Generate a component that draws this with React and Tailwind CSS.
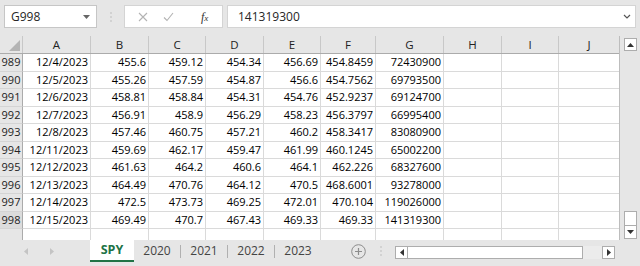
import React from "react";

const rows = [
  ["989", "12/4/2023", "455.6", "459.12", "454.34", "456.69", "454.8459", "72430900"],
  ["990", "12/5/2023", "455.26", "457.59", "454.87", "456.6", "454.7562", "69793500"],
  ["991", "12/6/2023", "458.81", "458.84", "454.31", "454.76", "452.9237", "69124700"],
  ["992", "12/7/2023", "456.91", "458.9", "456.29", "458.23", "456.3797", "66995400"],
  ["993", "12/8/2023", "457.46", "460.75", "457.21", "460.2", "458.3417", "83080900"],
  ["994", "12/11/2023", "459.69", "462.17", "459.47", "461.99", "460.1245", "65002200"],
  ["995", "12/12/2023", "461.63", "464.2", "460.6", "464.1", "462.226", "68327600"],
  ["996", "12/13/2023", "464.49", "470.76", "464.12", "470.5", "468.6001", "93278000"],
  ["997", "12/14/2023", "472.5", "473.73", "469.25", "472.01", "470.104", "119026000"],
  ["998", "12/15/2023", "469.49", "470.7", "467.43", "469.33", "469.33", "141319300"],
];

const cols = ["A", "B", "C", "D", "E", "F", "G", "H", "I", "J"];
const gridCols = "grid grid-cols-[23px_68px_58px_57px_58px_57px_55px_68px_58px_57px_61px]";

const FormulaBar = () => (
  <div className="h-[36px] flex items-start pt-[5px] pl-[4px] text-[12px] text-[#262626]">
    <div className="w-[93px] h-[23px] bg-white border border-[#c6c6c6] flex items-center justify-between pl-[6px] pr-[6px]">
      <span>G998</span>
      <svg width="7" height="4" viewBox="0 0 7 4"><path d="M0 0h7L3.5 4z" fill="#666" /></svg>
    </div>
    <div className="w-[27px] h-[23px] flex items-center justify-center">
      <svg width="2" height="10" viewBox="0 0 2 10">
        <circle cx="1" cy="1" r="0.8" fill="#b8b8b8" />
        <circle cx="1" cy="5" r="0.8" fill="#b8b8b8" />
        <circle cx="1" cy="9" r="0.8" fill="#b8b8b8" />
      </svg>
    </div>
    <div className="w-[99px] h-[23px] bg-white border border-[#d4d4d4] flex items-center relative">
      <svg className="absolute left-[13px] top-[6px]" width="10" height="10" viewBox="0 0 10 10">
        <path d="M1 1l8 8M9 1l-8 8" stroke="#b3b3b3" strokeWidth="1.1" fill="none" />
      </svg>
      <svg className="absolute left-[38px] top-[6px]" width="11" height="10" viewBox="0 0 11 10">
        <path d="M1 5.5l3 3L10 1" stroke="#b3b3b3" strokeWidth="1.1" fill="none" />
      </svg>
      <span className="absolute left-[76px] top-[2px] italic text-[12px] text-[#333]" style={{ fontFamily: '"Liberation Serif", serif' }}>
        f<span className="text-[9px]">x</span>
      </span>
    </div>
    <div className="ml-[4px] w-[409px] h-[23px] bg-white border border-[#d4d4d4] flex items-center justify-between pl-[10px] pr-[4px]">
      <span>141319300</span>
      <svg width="8" height="5" viewBox="0 0 8 5"><path d="M1 1l3 3 3-3" stroke="#555" strokeWidth="1.2" fill="none" /></svg>
    </div>
  </div>
);

const Header = () => (
  <div className={`${gridCols} h-[20px] bg-[#e6e6e6] border-b border-[#ababab] text-[#222] text-[11.5px]`}>
    <div className="relative border-r border-[#c8c8c8]">
      <svg className="absolute right-[2px] bottom-[2px]" width="11" height="11" viewBox="0 0 11 11">
        <path d="M11 0v11H0z" fill="#b4b4b4" />
      </svg>
    </div>
    {cols.map((c) => (
      <div key={c} className="flex items-center justify-center border-r border-[#c8c8c8]">
        {c}
      </div>
    ))}
  </div>
);

const DataRow = ({ r, last }) => (
  <div className={`${gridCols} h-[18px]`}>
    <div
      className={`flex items-center justify-center text-[#222] border-r border-[#ababab] border-b border-b-[#d4d4d4] ${
        last ? "bg-[#dcdcdc]" : "bg-[#e6e6e6]"
      }`}
    >
      {r[0]}
    </div>
    {r.slice(1).map((v, i) => (
      <div key={i} className="bg-white border-r border-b border-[#dadada] flex items-center justify-end pr-[2px] text-black">
        {v}
      </div>
    ))}
    {[0, 1, 2].map((i) => (
      <div key={"e" + i} className="bg-white border-r border-b border-[#dadada]" />
    ))}
  </div>
);

const VScroll = () => (
  <div className="w-[20px] flex flex-col items-center bg-[#e6e6e6] pt-[2px] pl-[1px]">
    <div className="w-[13px] h-[13px] bg-white border border-[#adadad] flex items-center justify-center">
      <svg width="7" height="4" viewBox="0 0 7 4"><path d="M0 4h7L3.5 0z" fill="#333" /></svg>
    </div>
    <div className="flex-1" />
    <div className="w-[13px] h-[15px] bg-white border border-[#adadad]" />
    <div className="w-[13px] h-[13px] bg-white border border-[#adadad] border-t-0 flex items-center justify-center mb-[1px]">
      <svg width="7" height="4" viewBox="0 0 7 4"><path d="M0 0h7L3.5 4z" fill="#333" /></svg>
    </div>
  </div>
);

const TabBar = () => (
  <div className="h-[26px] flex items-start text-[12px] text-[#444]">
    <div className="w-[90px] h-[22px] flex items-center">
      <svg className="ml-[24px]" width="4" height="7" viewBox="0 0 4 7"><path d="M4 0v7L0 3.5z" fill="#c4c4c4" /></svg>
      <svg className="ml-[22px]" width="4" height="7" viewBox="0 0 4 7"><path d="M0 0v7l4-3.5z" fill="#c4c4c4" /></svg>
    </div>
    <div className="w-[44px] h-[22px] bg-white border-b-2 border-[#217346] flex items-center justify-center font-bold text-[#217346] text-[12.5px]">
      SPY
    </div>
    {["2020", "2021", "2022", "2023"].map((t, i) => (
      <div key={t} className="h-[22px] flex items-center">
        {i > 0 && <div className="w-px h-[13px] bg-[#b0b0b0]" />}
        <div className="w-[46px] text-center">{t}</div>
      </div>
    ))}
    <div className="w-[30px]" />
    <div className="h-[22px] flex items-center">
      <svg width="15" height="15" viewBox="0 0 15 15">
        <circle cx="7.5" cy="7.5" r="6.8" stroke="#8c8c8c" strokeWidth="1" fill="none" />
        <path d="M7.5 4v7M4 7.5h7" stroke="#8c8c8c" strokeWidth="1.2" />
      </svg>
    </div>
    <div className="w-[29px] h-[22px] flex items-center justify-center">
      <svg width="2" height="10" viewBox="0 0 2 10">
        <circle cx="1" cy="1" r="0.8" fill="#b8b8b8" />
        <circle cx="1" cy="5" r="0.8" fill="#b8b8b8" />
        <circle cx="1" cy="9" r="0.8" fill="#b8b8b8" />
      </svg>
    </div>
    <div className="mt-[6px] w-[220px] h-[13px] flex">
      <div className="w-[13px] h-[13px] bg-white border border-[#adadad] flex items-center justify-center">
        <svg width="4" height="7" viewBox="0 0 4 7"><path d="M4 0v7L0 3.5z" fill="#333" /></svg>
      </div>
      <div className="w-[175px] h-[13px] bg-white border border-[#adadad] border-l-0" />
      <div className="flex-1 bg-[#ececec]" />
      <div className="w-[13px] h-[13px] bg-white border border-[#adadad] flex items-center justify-center">
        <svg width="4" height="7" viewBox="0 0 4 7"><path d="M0 0v7l4-3.5z" fill="#333" /></svg>
      </div>
    </div>
  </div>
);

export default function App() {
  return (
    <div
      className="w-[640px] h-[266px] bg-[#e6e6e6] flex flex-col overflow-hidden"
      style={{ fontFamily: '"Open Sans", "Liberation Sans", sans-serif' }}
    >
      <FormulaBar />
      <div className="h-[204px] flex">
        <div className="w-[620px] flex flex-col overflow-hidden border-r border-[#bdbdbd] text-[11px]">
          <Header />
          {rows.map((r, i) => (
            <DataRow key={r[0]} r={r} last={i === rows.length - 1} />
          ))}
          <div className={`${gridCols} h-[18px]`}>
            <div className="bg-[#e6e6e6] border-r border-[#ababab]" />
            {cols.map((c) => (
              <div key={c} className="bg-white border-r border-[#dadada]" />
            ))}
          </div>
        </div>
        <VScroll />
      </div>
      <TabBar />
    </div>
  );
}
